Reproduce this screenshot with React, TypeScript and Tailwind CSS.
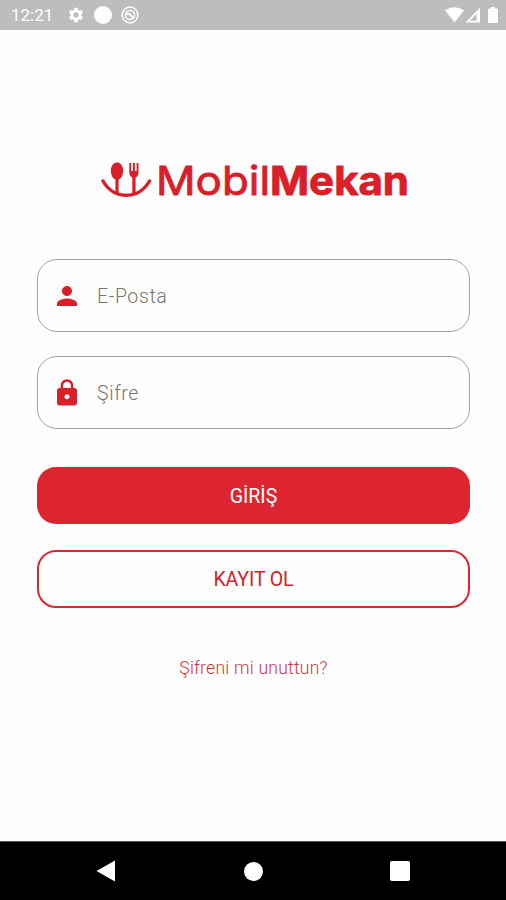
import { useState } from "react";
import { MdLock, MdPerson, MdSettings } from "react-icons/md";

function StatusBar() {
  return (
    <header className="flex h-[30px] shrink-0 items-center bg-[#bdbdbd] pl-[11px] pr-[8px] text-white">
      <span className="w-[56px] text-[17px] leading-none">12:21</span>
      <MdSettings className="size-[18px]" />
      <span className="ml-[9px] size-[18px] rounded-full bg-white" />
      <svg viewBox="0 0 18 18" className="ml-[9px] size-[18px]" fill="none" stroke="currentColor">
        <circle cx="9" cy="9" r="7.9" strokeWidth="1.5" />
        <circle cx="9" cy="9" r="4.600" strokeWidth="1.500" />
        <path d="M5.500 8.300Q8.500 7 9.800 9.300L12.800 12.500" strokeWidth="1.900" />
      </svg>

      <div className="ml-auto flex items-center">
        <svg viewBox="0 0 19 16" className="h-[16px] w-[19px]" fill="currentColor">
          <path d="M0 3.300Q9.500-3 19 3.300L9.500 15.500Z" />
        </svg>
        <svg viewBox="0 0 16 16" className="ml-px h-[16px] w-[16px]" fill="currentColor">
          <path fillRule="evenodd" d="M15 .5v15H.5Zm-1.600 4L5 13.700h6.500V7l1.900-2.500Z" />
        </svg>
        <svg viewBox="0 0 10 16" className="ml-[7px] h-[16px] w-[10px]" fill="currentColor">
          <path d="M3 0h4v1.500h2q1 0 1 1V15q0 1-1 1H1q-1 0-1-1V2.500q0-1 1-1h2Z" />
        </svg>
      </div>
    </header>
  );
}

function Logo() {
  return (
    <svg viewBox="0 0 310 60" className="h-[60px] w-[310px]" fill="#da1f2a">
      {/* Smile */}
      <path d="M2 29C12.500 48 38 48 48.500 29" fill="none" stroke="#da1f2a" strokeWidth="3.500" strokeLinecap="round" />
      {/* Spoon */}
      <ellipse cx="16" cy="19" rx="6.200" ry="8.700" />
      <path d="M14.400 25h3.200v17h-3.200Z" />
      {/* Fork */}
      <path d="M28.300 11h1.900v8h1.700v-8h2v8h1.700v-8h1.900v9.500q0 3.500-2.900 5v16.500h-3.300V25.500q-3-1.500-3-5Z" />
      {/* Wordmark */}
      <g fontFamily="Inter, sans-serif" fontSize="40" stroke="#da1f2a" strokeLinejoin="round">
        <text x="55" y="43" fontWeight="400" strokeWidth="0.900" textLength="114" lengthAdjust="spacingAndGlyphs">
          Mobil
        </text>
        <text x="169" y="43" fontWeight="700" strokeWidth="0.900" textLength="139" lengthAdjust="spacingAndGlyphs">
          Mekan
        </text>
      </g>
    </svg>
  );
}

type FieldProps = {
  icon: React.ReactNode;
  type: string;
  placeholder: string;
  value: string;
  onChange: (value: string) => void;
};

function Field({ icon, type, placeholder, value, onChange }: FieldProps) {
  return (
    <label className="flex h-[73px] items-center rounded-[20px] border border-[#a3a3a3] pl-[14px]">
      {icon}
      <input
        type={type}
        placeholder={placeholder}
        value={value}
        onChange={(e) => onChange(e.target.value)}
        className="ml-[15px] min-w-0 flex-1 bg-transparent pt-[2px] text-[19.5px] font-light tracking-[0.6px] text-gray-700 outline-none placeholder:text-[#757575]"
      />
    </label>
  );
}

function NavBar() {
  return (
    <nav className="flex h-[59px] shrink-0 items-center justify-between border-t border-[#555] bg-black pl-[96px] pr-[96px]">
      <svg viewBox="0 0 20 22" className="h-[22px] w-[20px]" fill="white">
        <path d="M.5 11 19 .5v21Z" />
      </svg>
      <span className="size-[19px] rounded-full bg-white" />
      <span className="size-[20px] rounded-[2px] bg-white" />
    </nav>
  );
}

export default function App() {
  const [email, setEmail] = useState("");
  const [password, setPassword] = useState("");

  return (
    <div className="flex h-[900px] w-[506px] flex-col bg-[#fefefe] font-['Roboto',sans-serif] antialiased">
      <StatusBar />

      <main className="flex flex-1 flex-col pl-[37px] pr-[36px] pt-[122px]">
        <div className="flex justify-center pl-[4px]">
          <Logo />
        </div>

        <form className="mt-[47px] flex flex-col" onSubmit={(e) => e.preventDefault()}>
          <div className="flex flex-col gap-[24px]">
            <Field
              icon={<MdPerson className="size-[30px] text-[#da1f2a]" />}
              type="email"
              placeholder="E-Posta"
              value={email}
              onChange={setEmail}
            />
            <Field
              icon={<MdLock className="size-[30px] text-[#da1f2a]" />}
              type="password"
              placeholder="Şifre"
              value={password}
              onChange={setPassword}
            />
          </div>

          <button type="submit" className="mt-[38px] h-[57px] rounded-[19px] bg-[#dc252f] pt-[2px] text-[19.5px] text-white">
            GİRİŞ
          </button>
          <button
            type="button"
            className="mt-[26px] h-[58px] rounded-[19px] border-2 border-[#da2830] pt-[2px] text-[19.5px] tracking-[-0.1px] text-[#d3222b]"
          >
            KAYIT OL
          </button>
          <a href="#" className="mt-[47px] self-center text-[17.5px] font-light leading-[26px] tracking-[0.25px] text-[#d3323b]">
            Şifreni mi unuttun?
          </a>
        </form>
      </main>

      <NavBar />
    </div>
  );
}
